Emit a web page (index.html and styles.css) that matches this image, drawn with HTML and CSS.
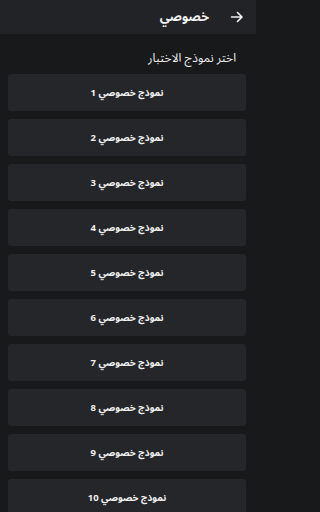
FILE: index.html
```html
<!DOCTYPE html>
<html lang="ar">
<head>
<meta charset="utf-8">
<link rel="stylesheet" href="styles.css">
</head>
<body>
<div class="app" dir="rtl">
<header class="topbar">
  <span class="back">
    <svg width="14" height="14" viewBox="0 0 14 14"><path d="M1.5 7H12M7.5 2.5L12 7L7.5 11.5" fill="none" stroke="#f2f2f2" stroke-width="1.6" stroke-linecap="round" stroke-linejoin="round"/></svg>
  </span>
  <span class="title">خصوصي</span>
</header>
<main class="content">
  <h2 class="heading">اختر نموذج الاختبار</h2>
  <div class="list">
    <div class="card">نموذج خصوصي 1</div>
    <div class="card">نموذج خصوصي 2</div>
    <div class="card">نموذج خصوصي 3</div>
    <div class="card">نموذج خصوصي 4</div>
    <div class="card">نموذج خصوصي 5</div>
    <div class="card">نموذج خصوصي 6</div>
    <div class="card">نموذج خصوصي 7</div>
    <div class="card">نموذج خصوصي 8</div>
    <div class="card">نموذج خصوصي 9</div>
    <div class="card">نموذج خصوصي 10</div>
  </div>
</main>
</div>
</body>
</html>
```

FILE: styles.css
```css
html, body {
  margin: 0;
  padding: 0;
  background: #18191b;
  color: #f0f0f0;
  font-family: "Noto Sans Arabic", "Noto Naskh Arabic", "DejaVu Sans", sans-serif;
}
.app {
  width: 256px;
  height: 512px;
  overflow: hidden;
}
.topbar {
  height: 35px;
  background: #222326;
  display: flex;
  align-items: center;
  padding: 0 12px 0 0;
  gap: 21px;
  box-sizing: border-box;
  border-bottom: 1px solid #1a1b1d;
}
.back {
  display: flex;
  width: 14px;
  height: 14px;
}
.title {
  font-size: 12.5px;
  font-weight: bold;
  color: #f2f2f2;
}
.content {
  padding: 12px 10px 0 8px;
}
.heading {
  margin: 0 10px 4px 0;
  font-size: 12px;
  font-weight: normal;
  color: #eeeeee;
  line-height: 23px;
  height: 23px;
}
.list {
  display: flex;
  flex-direction: column;
  gap: 8px;
}
.card {
  height: 37px;
  background: #25262a;
  border-radius: 3px;
  display: flex;
  align-items: center;
  justify-content: center;
  font-size: 9.5px;
  font-weight: bold;
  color: #f0f0f0;
  flex-shrink: 0;
}
```
